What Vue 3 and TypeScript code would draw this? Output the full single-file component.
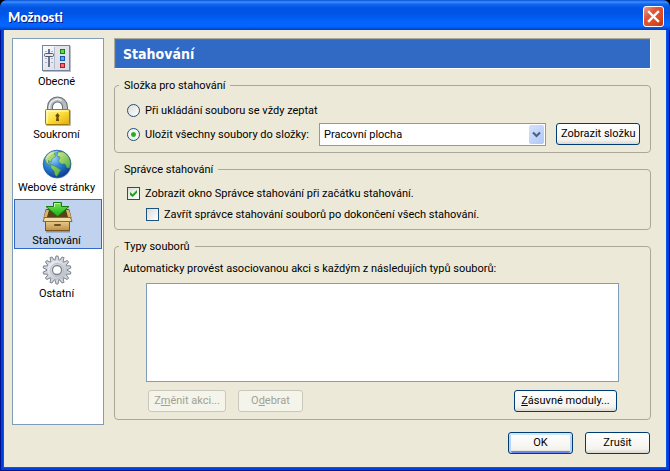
<script setup lang="ts">
import { ref } from 'vue'

type PaneId = 'general' | 'privacy' | 'content' | 'downloads' | 'advanced'

const panes: { id: PaneId; label: string }[] = [
  { id: 'general', label: 'Obecné' },
  { id: 'privacy', label: 'Soukromí' },
  { id: 'content', label: 'Webové stránky' },
  { id: 'downloads', label: 'Stahování' },
  { id: 'advanced', label: 'Ostatní' },
]

const current = ref<PaneId>('downloads')
const target = ref<'ask' | 'folder'>('folder')
const showManager = ref(true)
const closeManager = ref(false)

const teeth = Array.from({ length: 14 }, (_, i) => (i * 360) / 14)
</script>

<template>
  <div class="window">
    <header class="titlebar">
      <h1>Možnosti</h1>
      <button class="close" type="button" aria-label="Zavřít">
        <svg viewBox="0 0 21 21" width="21" height="21">
          <path d="M6 6 L15 15 M15 6 L6 15" stroke="#fff" stroke-width="2.4" stroke-linecap="square" />
        </svg>
      </button>
    </header>

    <div class="body">
      <div class="columns">
        <nav class="sidebar">
          <button
            v-for="pane in panes"
            :key="pane.id"
            type="button"
            class="pane"
            :class="{ selected: pane.id === current }"
            @click="current = pane.id"
          >
            <svg v-if="pane.id === 'general'" viewBox="0 0 32 32" width="32" height="32">
              <defs>
                <linearGradient id="panel" x1="0" y1="0" x2="1" y2="1">
                  <stop offset="0" stop-color="#fdfdfe" />
                  <stop offset="1" stop-color="#cfd4de" />
                </linearGradient>
              </defs>
              <rect x="2" y="4" width="28" height="26" fill="#b9bcc4" />
              <rect x="1.5" y="3.5" width="27" height="25" fill="url(#panel)" stroke="#76839a" />
              <rect x="14" y="4" width="14" height="24" fill="#dbe0ea" opacity=".7" />
              <path d="M13.500 5 V27" stroke="#b4bccb" />
              <path d="M8 7 V25" stroke="#68748a" stroke-width="2" />
              <path d="M4 9.500 H6 M10 9.500 H12 M4 16.500 H6 M10 16.500 H12 M4 20.500 H6 M10 20.500 H12" stroke="#a9b2c2" />
              <rect x="3.500" y="11.500" width="9" height="3" rx="1" fill="#e4e9f2" stroke="#4d5a70" />
              <rect x="19.500" y="7.500" width="4" height="4" fill="#5fdc3e" stroke="#1b7d12" />
              <rect x="19.500" y="14.500" width="4" height="4" fill="#55a8f4" stroke="#1657a8" />
              <rect x="19.500" y="21.500" width="4" height="4" fill="#f66570" stroke="#b01b2b" />
            </svg>

            <svg v-else-if="pane.id === 'privacy'" viewBox="0 0 32 32" width="32" height="32">
              <defs>
                <linearGradient id="brass" x1="0" y1="0" x2="1" y2="1">
                  <stop offset="0" stop-color="#fff9a8" />
                  <stop offset=".5" stop-color="#fbdc35" />
                  <stop offset="1" stop-color="#e2a911" />
                </linearGradient>
              </defs>
              <path d="M9 17 V12 a7.500 7.500 0 0 1 15 0 V17" fill="none" stroke="#697075" stroke-width="6" />
              <path d="M9 17 V12 a7.500 7.500 0 0 1 15 0 V17" fill="none" stroke="#b4babd" stroke-width="4" />
              <path d="M8.500 16 V12 a8 8 0 0 1 12 -6.500" fill="none" stroke="#eef1f2" stroke-width="1.500" />
              <rect x="5" y="15" width="25" height="16" rx="1" fill="#b7b7ae" />
              <rect x="4.500" y="14.500" width="24" height="15" rx="1" fill="url(#brass)" stroke="#a17b0a" />
              <path d="M6 28 V16 H27" fill="none" stroke="#fffbd0" />
              <path d="M16.500 18 l2.200 2.700 l-1.200 1.500 l.6 3.800 h-3.200 l.6 -3.800 l-1.200 -1.500 Z" fill="#6b4a05" />
            </svg>

            <svg v-else-if="pane.id === 'content'" viewBox="0 0 32 32" width="32" height="32">
              <defs>
                <radialGradient id="ocean" cx=".35" cy=".28" r=".75">
                  <stop offset="0" stop-color="#a8dcff" />
                  <stop offset=".45" stop-color="#3189dc" />
                  <stop offset="1" stop-color="#0b3d91" />
                </radialGradient>
                <linearGradient id="land" x1="0" y1="0" x2="1" y2="1">
                  <stop offset="0" stop-color="#d2ea8c" />
                  <stop offset="1" stop-color="#4fae40" />
                </linearGradient>
              </defs>
              <circle cx="16.500" cy="16.500" r="14" fill="#b5bfca" />
              <circle cx="16" cy="16" r="13.800" fill="url(#ocean)" stroke="#1e5ba8" stroke-width=".8" />
              <path
                d="M4 11 C6 6 10 3 14 3.500 L13 6 L15 7 L14 9 L11 11 L10 14 L7.500 12.500 L7.500 15 L10 17 L13 17.500 L17 20 L20 22 L18 25 L16 28.500 L14 27 L13 23 L10 20 L9.500 17.500 L5.500 15 Z"
                fill="url(#land)"
                stroke="#397c36"
                stroke-width=".5"
              />
              <path
                d="M17 4 L22 4 C26.500 6 29.500 11 29.500 16 L28.500 20 L26 20 L24 16 L20 16 L17.500 13 L19 9 L16 8 Z"
                fill="url(#land)"
                stroke="#397c36"
                stroke-width=".5"
              />
              <path d="M4 12 C5 6 11 2 18 3 C13 5 8 7 4 12" fill="#fff" opacity=".4" />
            </svg>

            <svg v-else-if="pane.id === 'downloads'" viewBox="0 0 32 32" width="32" height="32">
              <defs>
                <linearGradient id="arrow" x1="0" y1="0" x2="0" y2="1">
                  <stop offset="0" stop-color="#7be650" />
                  <stop offset="1" stop-color="#16b016" />
                </linearGradient>
                <linearGradient id="carton" x1="0" y1="0" x2="0" y2="1">
                  <stop offset="0" stop-color="#edd08d" />
                  <stop offset="1" stop-color="#bd914a" />
                </linearGradient>
              </defs>
              <path d="M5 30.500 H29" stroke="#8494ae" stroke-width="2" />
              <path d="M5 8.500 H28 L30 17 H3 Z" fill="#594219" stroke="#74531f" />
              <path d="M5 9 L8 9 L6 16 H3 Z M25 9 H28 L30 16 H27 Z" fill="#d7b36d" />
              <rect x="4.500" y="19.500" width="24" height="10" fill="url(#carton)" stroke="#79571f" />
              <path d="M3.500 16.500 H29.500 L31 20.500 H2 Z" fill="#f4dda4" stroke="#8e6829" />
              <rect x="13" y="23" width="7" height="2" rx="1" fill="#6d501f" />
              <path d="M12.500 1.500 H20.500 V5.500 H28 L16.500 15.500 L5 5.500 H12.500 Z" fill="url(#arrow)" stroke="#127b12" />
              <path d="M13.500 6 V2.500 H19" fill="none" stroke="#d0f7b2" />
            </svg>

            <svg v-else viewBox="0 0 32 32" width="32" height="32">
              <defs>
                <linearGradient id="steel" x1="0" y1="0" x2="1" y2="1">
                  <stop offset="0" stop-color="#f3f5f7" />
                  <stop offset="1" stop-color="#b4bac3" />
                </linearGradient>
              </defs>
              <path
                v-for="angle in teeth"
                :key="angle"
                d="M13.800 7 L15 2 H17 L18.200 7 Z"
                fill="#d3d7dd"
                stroke="#757d89"
                stroke-width=".9"
                :transform="`rotate(${angle} 16 16)`"
              />
              <circle cx="16" cy="16" r="10" fill="url(#steel)" />
              <circle cx="16" cy="16" r="6.500" fill="none" stroke="#b9bfc8" />
              <circle cx="16" cy="16" r="4.500" fill="#fff" stroke="#7c8490" stroke-width="1.300" />
            </svg>

            <span>{{ pane.label }}</span>
          </button>
        </nav>

        <main class="content">
          <h2>Stahování</h2>

          <fieldset class="folder">
            <legend>Složka pro stahování</legend>
            <div class="line">
              <input id="ask" v-model="target" type="radio" name="target" value="ask" />
              <label for="ask">Při ukládání souboru se vždy zeptat</label>
            </div>
            <div class="line">
              <input id="save" v-model="target" type="radio" name="target" value="folder" />
              <label for="save" class="save">Uložit všechny soubory do složky:</label>
              <span class="combo">
                <select aria-label="Složka">
                  <option>Pracovní plocha</option>
                </select>
                <span class="drop">
                  <svg viewBox="0 0 9 7" width="9" height="7">
                    <path d="M1 1.500 L4.500 5 L8 1.500" fill="none" stroke="#4d6185" stroke-width="2.200" />
                  </svg>
                </span>
              </span>
              <button class="btn show" type="button">Zobrazit složku</button>
            </div>
          </fieldset>

          <fieldset class="manager">
            <legend>Správce stahování</legend>
            <div class="line">
              <input id="show" v-model="showManager" type="checkbox" />
              <label for="show">Zobrazit okno Správce stahování při začátku stahování.</label>
            </div>
            <div class="line nested">
              <input id="finish" v-model="closeManager" type="checkbox" />
              <label for="finish">Zavřít správce stahování souborů po dokončení všech stahování.</label>
            </div>
          </fieldset>

          <fieldset class="types">
            <legend>Typy souborů</legend>
            <p id="types-label">Automaticky provést asociovanou akci s každým z následujích typů souborů:</p>
            <div class="list" role="listbox" tabindex="0" aria-labelledby="types-label"></div>
            <div class="actions">
              <button class="btn change" type="button" disabled>Z<u>m</u>ěnit akci...</button>
              <button class="btn" type="button" disabled>O<u>d</u>ebrat</button>
              <button class="btn plugins" type="button"><u>Z</u>ásuvné moduly...</button>
            </div>
          </fieldset>
        </main>
      </div>

      <footer class="footer">
        <button class="btn default" type="button">OK</button>
        <button class="btn" type="button">Zrušit</button>
      </footer>
    </div>
  </div>
</template>

<style>
body {
  background: #000;
}
</style>

<style scoped>
* {
  box-sizing: border-box;
}

.window {
  display: flex;
  flex-direction: column;
  min-height: 100vh;
  overflow: hidden;
  border-radius: 7px 7px 0 0;
  background: #00138c;
  color: #000;
  font-family: Tahoma, Roboto, sans-serif;
  font-size: 11px;
  line-height: 13px;
}

button,
select {
  margin: 0;
  font: inherit;
  color: inherit;
}

.titlebar {
  position: relative;
  display: flex;
  align-items: center;
  justify-content: space-between;
  height: 30px;
  padding: 3px 6px 0 8px;
  background: linear-gradient(
    #0a4fd6 0,
    #3b91ff 2px,
    #1467ee 4px,
    #0054e3 8px,
    #0055e8 14px,
    #0364fc 22px,
    #0267ff 26px,
    #0048d8 29px,
    #003dc4 30px
  );
}

h1 {
  margin: 0;
  color: #fff;
  font-family: 'Trebuchet MS', Lato, sans-serif;
  font-size: 13px;
  font-weight: 900;
  line-height: 18px;
  text-shadow: 1px 1px 0 #0a1883;
}

.close {
  width: 21px;
  height: 21px;
  padding: 0;
  border: 1px solid #fff;
  border-radius: 3px;
  background: linear-gradient(135deg, #f0a08a 0, #e2553a 35%, #dc4a22 70%, #b93610 100%);
}

.close svg {
  display: block;
  margin: -1px;
}

.body {
  display: flex;
  flex: 1;
  flex-direction: column;
  margin: 0 4px 4px;
  padding: 8px 15px 13px 8px;
  background: #ece9d8;
  box-shadow:
    0 0 0 1px #0b55e6,
    0 0 0 3px #0040dc;
}

.columns {
  display: flex;
  flex: 1;
  gap: 10px;
}

.sidebar {
  display: flex;
  flex: none;
  flex-direction: column;
  gap: 3px;
  width: 92px;
  padding: 1px;
  border: 1px solid #7f9db9;
  background: #fff;
}

.pane {
  display: flex;
  flex-direction: column;
  align-items: center;
  gap: 1px;
  height: 50px;
  padding: 1px 3px 0 0;
  border: 1px solid transparent;
  background: none;
  white-space: nowrap;
}

.pane.selected {
  border-color: #316ac5;
  background: #c1d2ee;
}

.pane svg {
  flex: none;
}

.content {
  display: flex;
  flex: 1;
  flex-direction: column;
  gap: 10px;
  min-width: 0;
  padding-bottom: 5px;
}

h2 {
  height: 31px;
  margin: 0;
  padding: 0 8px;
  border: 1px solid;
  border-color: #aca899 #fff #fff #aca899;
  background: #316ac5;
  box-shadow: inset 1px 1px 0 #716f64;
  color: #fff;
  font-family: Tahoma, 'DejaVu Sans Condensed', sans-serif;
  font-size: 14px;
  font-weight: 700;
  line-height: 30px;
}

fieldset {
  display: flex;
  flex-direction: column;
  min-width: 0;
  margin: 0;
  padding: 0 10px 0 12px;
  border: 1px solid #aca899;
  border-radius: 4px;
}

legend {
  margin-left: -8px;
  padding: 0 5px;
}

.line {
  display: flex;
  align-items: center;
}

.line input {
  flex: none;
  width: 13px;
  height: 13px;
  margin: 0 5px 0 0;
  appearance: none;
  border: 1px solid #1c5180;
  background: linear-gradient(135deg, #dcdcd7, #fff);
}

.line input[type='radio'] {
  border-radius: 50%;
}

.line input[type='radio']:checked {
  background: radial-gradient(circle, #21a121 0, #31b431 2px, #f4f4f0 3px);
}

.line input[type='checkbox']:checked::before {
  content: '';
  display: block;
  width: 7px;
  height: 7px;
  margin: 2px;
  background: #21a121;
  clip-path: polygon(0 28%, 38% 60%, 100% 0, 100% 40%, 38% 100%, 0 70%);
}

.folder {
  padding-bottom: 6px;
}

.folder .line:first-of-type {
  height: 24px;
  margin-top: 6px;
}

.folder .line:last-of-type {
  height: 24px;
}

.save {
  min-width: 164px;
}

.combo {
  position: relative;
  flex: 1;
  min-width: 0;
  margin: 0 10px;
}

.combo select {
  display: block;
  width: 100%;
  height: 23px;
  padding: 0 20px 0 4px;
  appearance: none;
  border: 1px solid #7f9db9;
  border-radius: 0;
  background: #fff;
}

.drop {
  position: absolute;
  top: 2px;
  right: 2px;
  bottom: 2px;
  display: flex;
  align-items: center;
  justify-content: center;
  width: 15px;
  border-radius: 2px;
  background: linear-gradient(135deg, #d5e2fd, #aec8f7);
  pointer-events: none;
}

.manager .line {
  height: 21px;
}

.manager {
  padding-bottom: 4px;
}

.manager .line:first-of-type {
  margin-top: 7px;
}

.nested {
  padding-left: 19px;
}

.types {
  flex: 1;
  padding: 0 31px 7px 8px;
}

.types legend {
  margin-left: -4px;
}

.types p {
  margin: 9px 0 8px;
}

.list {
  flex: 1;
  min-height: 60px;
  margin-left: 23px;
  border: 1px solid #7f9db9;
  background: #fff;
}

.actions {
  display: flex;
  gap: 12px;
  margin: 8px 2px 0 25px;
}

.btn {
  min-width: 65px;
  height: 22px;
  padding: 0 4px;
  border: 1px solid #003c74;
  border-radius: 3px;
  background: linear-gradient(#fff, #f4f3ee 80%, #dcd7cb);
  line-height: 18px;
  white-space: nowrap;
}

.btn:disabled {
  border-color: #c9c7ba;
  background: #f5f4ea;
  color: #a1a192;
}

.btn.show {
  width: 84px;
}

.btn.change {
  width: 78px;
}

.btn.plugins {
  width: 103px;
  margin-left: auto;
}

.btn.default {
  box-shadow:
    inset 0 2px 0 #cee7ff,
    inset 2px 0 0 #bcd4f6,
    inset -2px 0 0 #bcd4f6,
    inset 0 -2px 0 #6982ee;
}

.footer {
  display: flex;
  justify-content: flex-end;
  gap: 12px;
  margin-top: 7px;
  padding-right: 1px;
}
</style>
